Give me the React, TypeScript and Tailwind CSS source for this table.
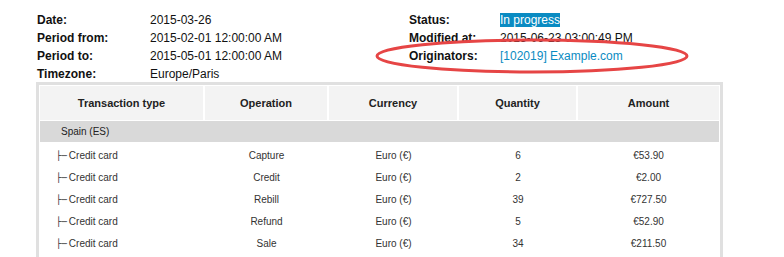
import React from 'react';

const infoLeft = [
  ['Date:', '2015-03-26'],
  ['Period from:', '2015-02-01 12:00:00 AM'],
  ['Period to:', '2015-05-01 12:00:00 AM'],
  ['Timezone:', 'Europe/Paris'],
];

const rows = [
  { op: 'Capture', qty: '6', amount: '€53.90' },
  { op: 'Credit', qty: '2', amount: '€2.00' },
  { op: 'Rebill', qty: '39', amount: '€727.50' },
  { op: 'Refund', qty: '5', amount: '€52.90' },
  { op: 'Sale', qty: '34', amount: '€211.50' },
];

export default function App() {
  return (
    <div className="relative w-[784px] h-[257px] overflow-hidden bg-white text-[#111] font-['Liberation_Sans',Arial,sans-serif]">
      {/* summary */}
      <div className="flex pt-[11px] pl-[37px] text-[12px] leading-[18px]">
        <div className="w-[372px]">
          {infoLeft.map(([k, v]) => (
            <div key={k} className="flex">
              <div className="w-[113px] font-bold">{k}</div>
              <div>{v}</div>
            </div>
          ))}
        </div>
        <div>
          <div className="flex">
            <div className="w-[91px] font-bold">Status:</div>
            <div>
              <span className="bg-[#0a8bc2] text-white">In progress</span>
            </div>
          </div>
          <div className="flex">
            <div className="w-[91px] font-bold">Modified at:</div>
            <div>2015-06-23 03:00:49 PM</div>
          </div>
          <div className="flex">
            <div className="w-[91px] font-bold">Originators:</div>
            <div className="text-[#0a8bc2]">[102019] Example.com</div>
          </div>
        </div>
      </div>

      {/* table */}
      <div className="ml-[36px] mt-[-1px] w-[687px] border-[3px] border-[#e0e0e0] bg-white pb-[30px]">
        <table className="w-full table-fixed border-separate border-spacing-[1px] text-[10px] text-[#333]">
          <colgroup>
            <col className="w-[164px]" />
            <col className="w-[123px]" />
            <col className="w-[129px]" />
            <col className="w-[118px]" />
            <col className="w-[141px]" />
          </colgroup>
          <thead>
            <tr className="h-[34px] bg-[#f3f3f3] text-[11px] font-bold text-[#222]">
              <th className="border-r border-white">Transaction type</th>
              <th className="border-r border-white">Operation</th>
              <th className="border-r border-white">Currency</th>
              <th className="border-r border-white">Quantity</th>
              <th>Amount</th>
            </tr>
          </thead>
          <tbody>
            <tr className="h-[21px]">
              <td colSpan={5} className="bg-[#d9d9d9] pl-[21px] text-[#222]">
                Spain (ES)
              </td>
            </tr>
            {rows.map((r) => (
              <tr key={r.op} className="h-[21px]">
                <td className="pl-[16px] pt-[4px]">
                  <span className="font-['DejaVu_Sans',sans-serif] text-[9px] mr-[2px]">├─</span>
                  Credit card
                </td>
                <td className="text-center pt-[4px]">{r.op}</td>
                <td className="text-center pt-[4px]">Euro (€)</td>
                <td className="text-center pt-[4px]">{r.qty}</td>
                <td className="text-center pt-[4px]">{r.amount}</td>
              </tr>
            ))}
          </tbody>
        </table>
      </div>

      {/* annotation */}
      <svg className="absolute left-0 top-0 pointer-events-none" width="784" height="100">
        <ellipse cx="532" cy="56" rx="155" ry="16" fill="none" stroke="#e64545" strokeWidth="3" />
      </svg>
    </div>
  );
}
